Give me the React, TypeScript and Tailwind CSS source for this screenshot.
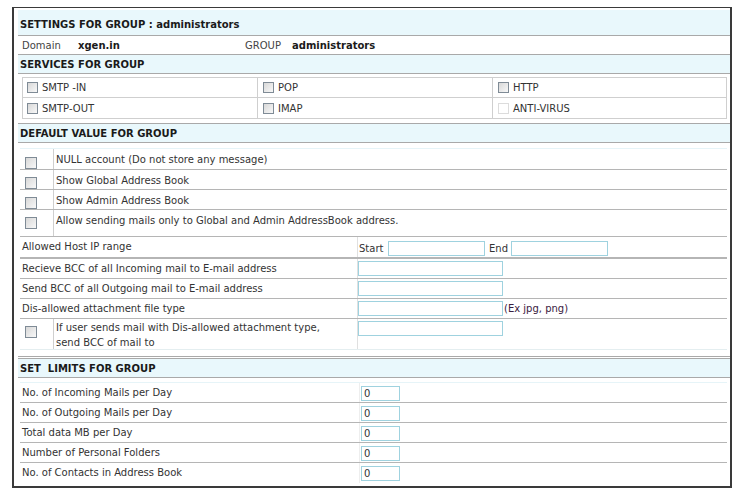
import React from "react";

const font = { fontFamily: '"DejaVu Sans", Verdana, sans-serif' };

function Box({ disabled = false, big = false }: { disabled?: boolean; big?: boolean }) {
  const size = big ? "w-[12px] h-[12px]" : "w-[11px] h-[11px]";
  return (
    <span
      className={
        disabled
          ? `inline-block ${size} border border-[#dcdcdc] bg-white shrink-0`
          : `inline-block ${size} border border-[#7f8b96] bg-gradient-to-br from-[#d8d8d8] to-[#f8f8f8] shrink-0`
      }
    />
  );
}

function Field({ w, value = "" }: { w: string; value?: string }) {
  return (
    <div
      className={`${w} h-[15px] border border-[#9fd2df] bg-white text-[10px] leading-[13px] pl-[2px] text-[#333]`}
    >
      {value}
    </div>
  );
}

function Header({ children }: { children: React.ReactNode }) {
  return (
    <div className="h-[20px] border-y border-[#a9a9a9] bg-[#e9f8fc] flex items-center pl-[2px] font-bold text-[10px] text-[#1a1a1a]">
      {children}
    </div>
  );
}

export default function App() {
  const limits = [
    "No. of Incoming Mails per Day",
    "No. of Outgoing Mails per Day",
    "Total data MB per Day",
    "Number of Personal Folders",
    "No. of Contacts in Address Book",
  ];
  return (
    <div className="w-[732px] h-[490px] bg-white pt-[7px] pl-[12px] text-[#2a2a2a]" style={font}>
      <div className="w-[720px] h-[481px] border-t border-l-2 border-r-2 border-b-2 border-[#3a3a3a] pl-[4px] pt-[2px] flex flex-col">
        {/* Title */}
        <div className="h-[26px] border-b border-[#a9a9a9] bg-[#e9f8fc] flex items-center pt-[4px] pl-[2px] font-bold text-[10px] text-[#1a1a1a]">
          SETTINGS FOR GROUP : administrators
        </div>
        {/* Domain row */}
        <div className="h-[18px] flex items-center text-[10px] pl-[4px]">
          <span className="w-[56px] text-[#444]">Domain</span>
          <span className="w-[167px] font-bold text-[#1a1a1a]">xgen.in</span>
          <span className="w-[47px] text-[#444]">GROUP</span>
          <span className="font-bold text-[#1a1a1a]">administrators</span>
        </div>
        <Header>SERVICES FOR GROUP</Header>
        {/* Services */}
        <div className="mt-[3px] ml-[4px] mr-[3px] border border-[#cfcfcf] grid grid-cols-[234px_235px_1fr] text-[10px] text-[#333]">
          {[
            ["SMTP -IN", false],
            ["POP", false],
            ["HTTP", false],
            ["SMTP-OUT", false],
            ["IMAP", false],
            ["ANTI-VIRUS", true],
          ].map(([label, dis], i) => (
            <div
              key={i}
              className={`h-[20px] flex items-center gap-[4px] ${i % 3 === 0 ? "pl-[4px]" : "pl-[5px] border-l border-[#cfcfcf]"} ${i < 3 ? "border-b border-[#cfcfcf]" : ""}`}
            >
              <Box disabled={dis as boolean} />
              <span>{label as string}</span>
            </div>
          ))}
        </div>
        <div className="mt-[4px]">
          <Header>DEFAULT VALUE FOR GROUP</Header>
        </div>
        {/* default rows */}
        <div className="mt-[5px] ml-[2px] mr-[3px] text-[10px] text-[#333]">
          {[
            ["NULL account (Do not store any message)", "h-[22px]"],
            ["Show Global Address Book", "h-[20px]"],
            ["Show Admin Address Book", "h-[20px]"],
            ["Allow sending mails only to Global and Admin AddressBook address.", "h-[27px]"],
          ].map(([t, h], i) => (
            <div key={i} className={`${h} flex border-b border-[#b5b5b5] ${i === 0 ? "border-t border-t-[#e6f4f8]" : ""}`}>
              <div className={`w-[34px] border-r border-[#cfcfcf] flex justify-start pl-[5px] ${i === 0 ? "pt-[8px]" : "pt-[7px]"}`}>
                <Box big />
              </div>
              <div className="pl-[2px] pt-[3px]">{t}</div>
            </div>
          ))}
          <div className="h-[22px] flex border-b-2 border-[#b5b5b5]">
            <div className="w-[338px] pl-[2px] pt-[2px] border-r border-[#e0e0e0]">Allowed Host IP range</div>
            <div className="flex items-start pt-[4px] pl-[1px]">
              <span className="w-[29px]">Start</span>
              <Field w="w-[97px]" />
              <span className="w-[26px] pl-[4px]">End</span>
              <Field w="w-[97px]" />
            </div>
          </div>
          {[
            ["Recieve BCC of all Incoming mail to E-mail address", ""],
            ["Send BCC of all Outgoing mail to E-mail address", ""],
            ["Dis-allowed attachment file type", "(Ex jpg, png)"],
          ].map(([t, extra], i) => (
            <div key={i} className="h-[20px] flex border-b border-[#b5b5b5]">
              <div className="w-[338px] pl-[2px] pt-[2px] border-r border-[#e0e0e0]">{t}</div>
              <div className="flex items-center">
                <Field w="w-[145px]" />
                {extra && <span className="text-[#3a2040] pl-[1px]">{extra}</span>}
              </div>
            </div>
          ))}
          <div className="h-[31px] flex border-b border-[#e4eef0]">
            <div className="w-[34px] border-r border-[#cfcfcf] flex justify-start pl-[5px] pt-[7px]">
              <Box big />
            </div>
            <div className="w-[304px] pl-[2px] pt-[1px] leading-[15px] border-r border-[#e0e0e0]">
              If user sends mail with Dis-allowed attachment type,
              <br />
              send BCC of mail to
            </div>
            <div className="pt-[2px]">
              <Field w="w-[145px]" />
            </div>
          </div>
        </div>
        <div className="mt-[6px] border-t border-[#a9a9a9]" />
        <div className="mt-[1px]">
          <Header>
            <span className="whitespace-pre">SET  LIMITS FOR GROUP</span>
          </Header>
        </div>
        <div className="mt-[4px] ml-[2px] mr-[3px] text-[10px] text-[#333] border-t border-[#e6f4f8]">
          {limits.map((t, i) => (
            <div key={i} className={`h-[20px] flex ${i < 4 ? "border-b border-[#b5b5b5]" : ""}`}>
              <div className="w-[340px] pl-[2px] pt-[2px] border-r border-[#eeeeee]">{t}</div>
              <div className="pt-[3px] pl-[1px]">
                <Field w="w-[39px]" value="0" />
              </div>
            </div>
          ))}
        </div>
      </div>
    </div>
  );
}
